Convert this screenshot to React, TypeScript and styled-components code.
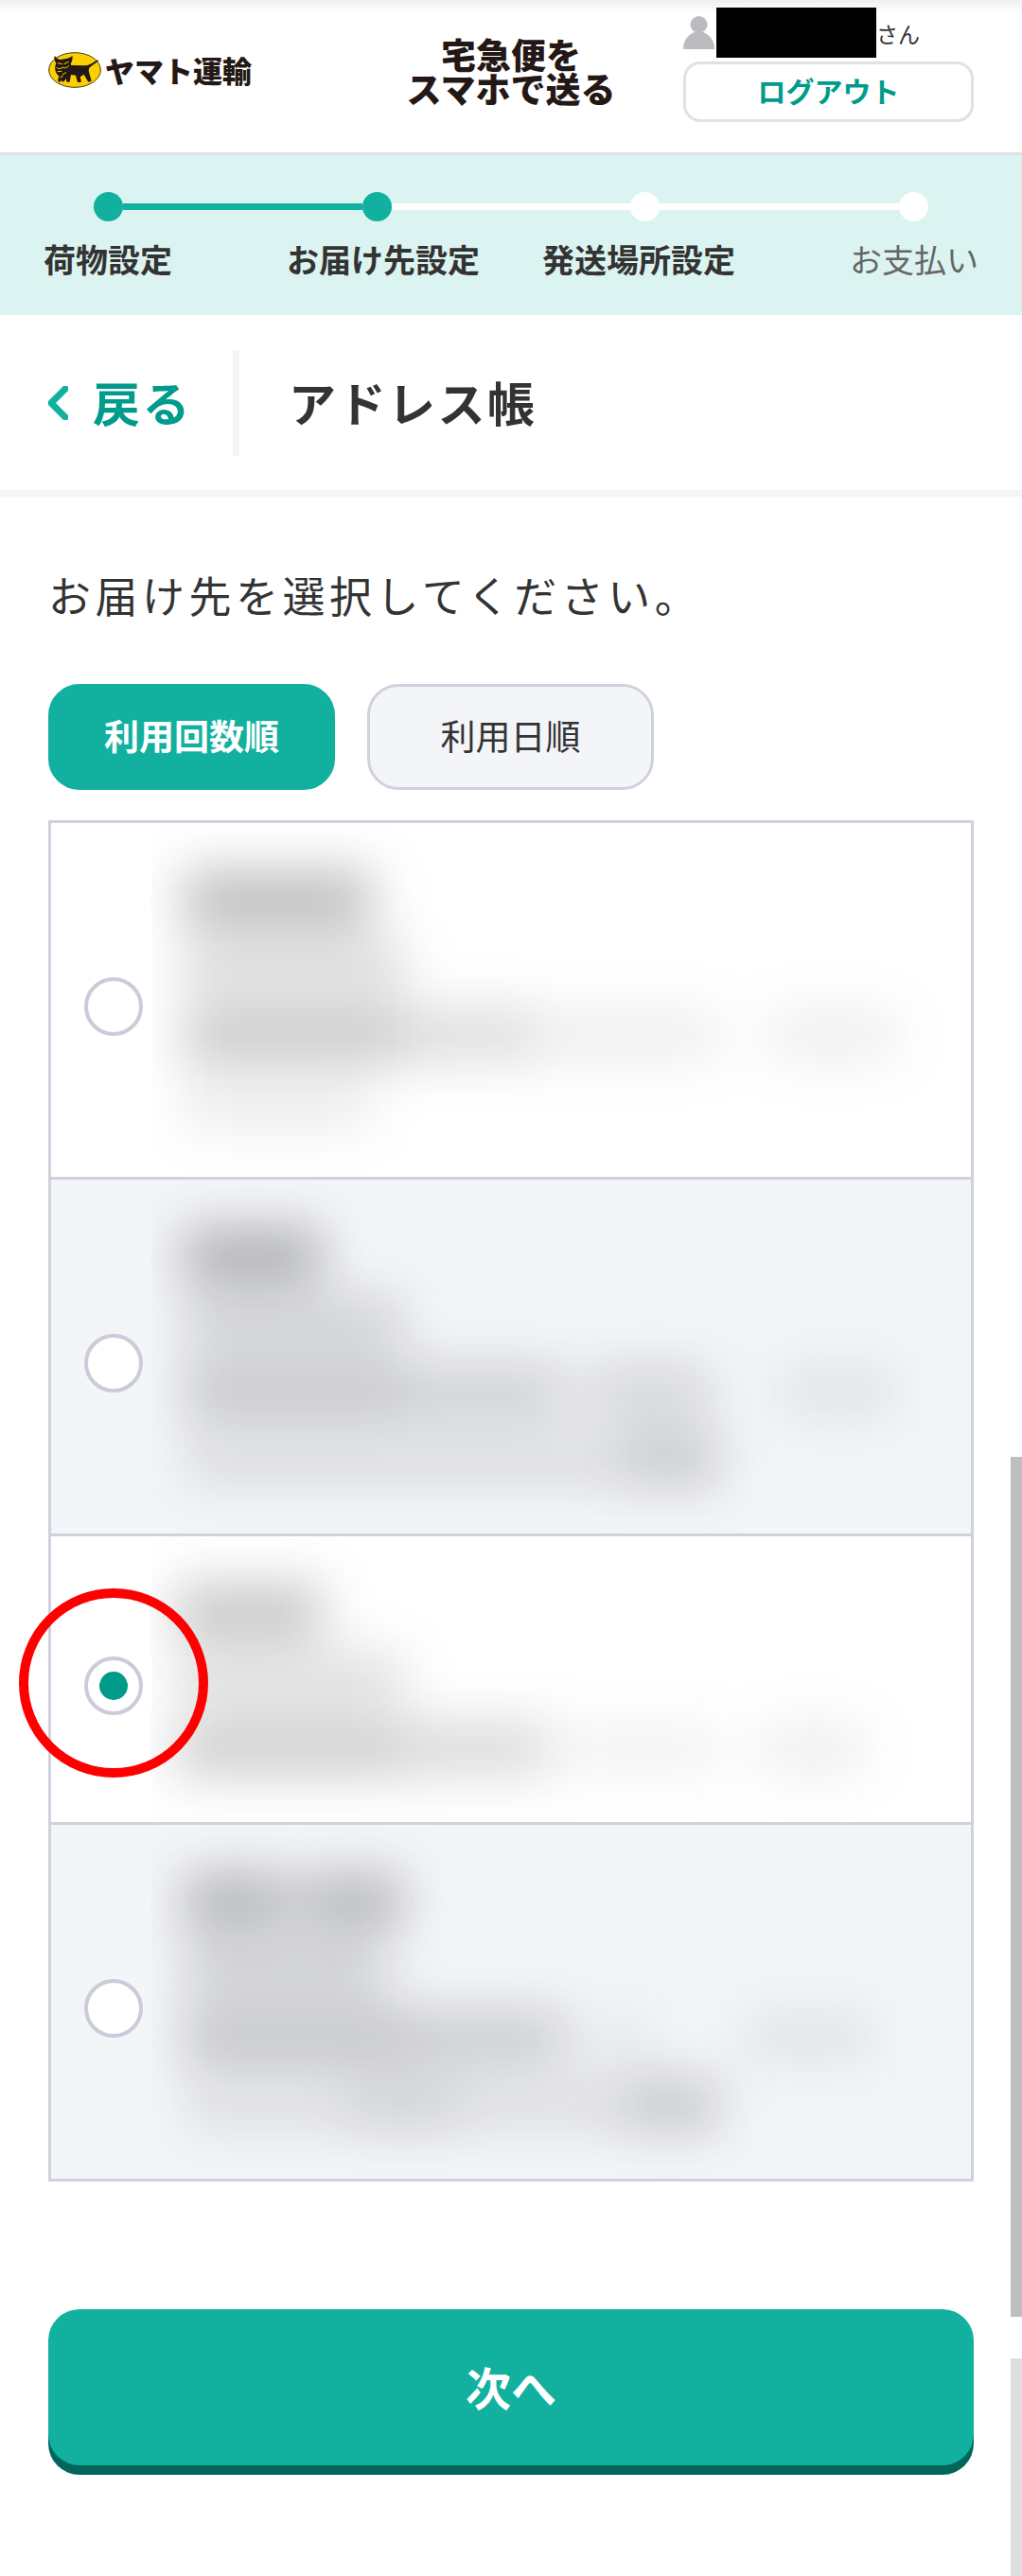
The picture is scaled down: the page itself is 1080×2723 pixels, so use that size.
import React, { useState } from "react";
import styled, { createGlobalStyle } from "styled-components";

const color = {
  green: "#12b09f",
  greenText: "#009b8a",
  greenShadow: "#00665b",
  mint: "#dcf4f1",
  text: "#333333",
  muted: "#666666",
  line: "#e0e1e8",
  border: "#cfd2dd",
  pale: "#f4f5f8",
};

const GlobalStyle = createGlobalStyle`
  *, *::before, *::after { box-sizing: border-box; }
  body {
    margin: 0;
    background: #ffffff;
    color: ${color.text};
    font-family: "Noto Sans CJK JP", "Noto Sans", sans-serif;
  }
  button { font-family: inherit; margin: 0; padding: 0 0 4px; cursor: pointer; }
  h1, h2, p, ol, ul { margin: 0; padding: 0; }
  ol, ul { list-style: none; }
`;

const Page = styled.div`
  position: relative;
  width: 100%;
  overflow: hidden;
`;

const Header = styled.header`
  display: grid;
  grid-template-columns: 1fr auto 1fr;
  height: 164px;
  padding: 0 51px;
  border-bottom: 3px solid ${color.line};
  background: linear-gradient(#efefef, #ffffff 14px);
`;

const Brand = styled.a`
  display: flex;
  align-items: center;
  align-self: start;
  gap: 4px;
  height: 148px;
  color: #231815;
  font-size: 31px;
  font-weight: 900;
  line-height: 36px;
  text-decoration: none;
  white-space: nowrap;
`;

const ServiceName = styled.h1`
  padding-top: 39px;
  color: #231815;
  font-size: 37px;
  font-weight: 900;
  line-height: 36px;
  text-align: center;
  white-space: nowrap;
`;

const Account = styled.div`
  justify-self: end;
  width: 307px;
  padding-top: 8px;
`;

const User = styled.div`
  display: flex;
  align-items: center;
  height: 53px;
  margin-bottom: 4px;
  font-size: 23px;
  line-height: 36px;
`;

const HiddenName = styled.span`
  width: 169px;
  height: 53px;
  margin-left: 2px;
  background: #000000;
`;

const Logout = styled.button`
  display: block;
  width: 100%;
  height: 64px;
  border: 3px solid ${color.line};
  border-radius: 18px;
  background: #ffffff;
  color: ${color.greenText};
  font-size: 30px;
  font-weight: 700;
  line-height: 48px;
`;

const Progress = styled.nav`
  height: 169px;
  padding-top: 39px;
  background: ${color.mint};
`;

const Track = styled.div`
  display: flex;
  align-items: center;
  padding: 0 99px;
`;

const Dot = styled.span<{ $done: boolean }>`
  width: 31px;
  height: 31px;
  border-radius: 50%;
  background: ${(p) => (p.$done ? color.green : "#ffffff")};
`;

const Bar = styled.span<{ $done: boolean }>`
  flex: 1;
  height: 7px;
  background: ${(p) => (p.$done ? color.green : "#ffffff")};
`;

const Labels = styled.ol`
  display: grid;
  grid-template-columns: repeat(4, 1fr);
  margin-top: 16px;
  font-size: 34px;
  line-height: 48px;
  text-align: center;
  white-space: nowrap;
`;

const Label = styled.li<{ $strong: boolean }>`
  color: ${(p) => (p.$strong ? color.text : color.muted)};
  font-weight: ${(p) => (p.$strong ? 700 : 400)};
  &:first-child { padding-left: 46px; text-align: left; }
  &:last-child { padding-right: 46px; text-align: right; }
`;

const TitleBar = styled.div`
  display: flex;
  align-items: center;
  height: 192px;
  padding: 0 51px;
  border-bottom: 7px solid ${color.pale};
  font-size: 50px;
  font-weight: 700;
  line-height: 72px;
  letter-spacing: 0.05em;
`;

const Back = styled.a`
  display: flex;
  align-items: center;
  gap: 26px;
  height: 112px;
  padding-right: 43px;
  border-right: 7px solid ${color.pale};
  color: ${color.greenText};
  text-decoration: none;
`;

const BarText = styled.span`
  padding-bottom: 4px;
`;

const Title = styled.h2`
  padding: 0 0 4px 52px;
  font-size: inherit;
  font-weight: inherit;
`;

const Main = styled.main`
  padding: 70px 51px 117px;
`;

const Lead = styled.p`
  font-size: 45px;
  line-height: 68px;
  letter-spacing: 0.1em;
`;

const Sorts = styled.div`
  display: flex;
  gap: 34px;
  margin: 60px 0 32px;
`;

const SortButton = styled.button<{ $active: boolean }>`
  width: 303px;
  height: 112px;
  border: 3px solid ${(p) => (p.$active ? color.green : color.border)};
  border-radius: 33px;
  background: ${(p) => (p.$active ? color.green : color.pale)};
  color: ${(p) => (p.$active ? "#ffffff" : color.text)};
  font-size: 37px;
  font-weight: ${(p) => (p.$active ? 700 : 400)};
  line-height: 48px;
`;

const List = styled.ul`
  border: 3px solid ${color.border};
`;

const Row = styled.li`
  display: flex;
  align-items: center;
  gap: 9px;
  padding: 0 8px 0 35px;
  & + & { border-top: 3px solid ${color.border}; }
  &:nth-child(even) { background: ${color.pale}; }
`;

const RadioCell = styled.div`
  position: relative;
  display: flex;
  padding-top: 14px;
`;

const Radio = styled.input`
  appearance: none;
  display: grid;
  place-items: center;
  width: 62px;
  height: 62px;
  margin: 0;
  border: 4px solid #cbccda;
  border-radius: 50%;
  background: #ffffff;
  cursor: pointer;
  &:checked::before {
    content: "";
    width: 30px;
    height: 30px;
    border-radius: 50%;
    background: ${color.greenText};
  }
`;

const Marker = styled.span`
  position: absolute;
  z-index: 1;
  top: -58px;
  left: -69px;
  width: 200px;
  height: 200px;
  border: 10px solid #ff0000;
  border-radius: 50%;
  pointer-events: none;
`;

const Entry = styled.label`
  flex: 1;
  overflow: hidden;
  padding: 44px 0 42px;
`;

const Masked = styled.span`
  display: block;
  filter: blur(27px);
`;

const MaskedLine = styled.span`
  display: flex;
  align-items: center;
  height: 72px;
`;

const Smudge = styled.span`
  height: 56px;
  background: ${color.text};
`;

const Next = styled.button`
  display: block;
  width: 100%;
  height: 165px;
  margin-top: 135px;
  border: 0;
  border-radius: 33px;
  background: ${color.green};
  box-shadow: 0 10px 0 ${color.greenShadow};
  color: #ffffff;
  font-size: 48px;
  font-weight: 700;
  line-height: 72px;
`;

const Scroll = styled.div`
  position: absolute;
  z-index: 2;
  top: 0;
  right: 0;
  bottom: 0;
  display: flex;
  flex-direction: column;
  justify-content: flex-end;
  gap: 44px;
  width: 12px;
  pointer-events: none;
`;

const Thumb = styled.span`
  height: 909px;
  background: #bebebe;
`;

const Rest = styled.span`
  height: 230px;
  background: #dddee0;
`;

function CatLogo() {
  return (
    <svg width="56" height="38" viewBox="0 0 168 114" aria-hidden="true">
      <ellipse cx="84" cy="57" rx="82" ry="55" fill="#fccf00" stroke="#4b3c10" strokeWidth="3" />
      <path
        fill="#231815"
        d="M20 11 C25 19 31 23 39 24 L56 21 C64 20 70 17 77 12 C77 24 75 31 71 37 L73 42 L112 43 C124 43 134 39 144 32 L156 25 C159 25 159 29 156 31 L136 45 C129 50 127 55 129 63 L137 92 L127 95 L113 71 L101 79 L105 95 L93 96 L87 74 L72 72 L68 95 L58 95 L57 84 L48 95 L41 91 L35 96 L30 90 L34 76 C25 69 20 58 22 44 L25 36 C20 28 18 20 20 11 Z"
      />
      <path
        fill="none"
        stroke="#fccf00"
        strokeWidth="3"
        strokeLinecap="round"
        d="M31 35 L43 38 M50 38 L64 31 M27 50 C34 54 40 54 45 49 C52 52 60 50 65 44 M30 62 L42 61 M45 72 L56 65 M38 80 L46 77"
      />
    </svg>
  );
}

function PersonIcon() {
  return (
    <svg width="33" height="35" viewBox="0 0 33 35" aria-hidden="true">
      <circle cx="16.5" cy="9" r="9" fill="#bbbbc0" />
      <path d="M0 35 C0 25 6 19 12 17 H21 C27 19 33 25 33 35 Z" fill="#bbbbc0" />
    </svg>
  );
}

function BackIcon() {
  return (
    <svg width="21" height="36" viewBox="0 0 21 36" aria-hidden="true">
      <path
        d="M18 3 L3 18 L18 33"
        fill="none"
        stroke={color.green}
        strokeWidth="7"
        strokeLinecap="round"
        strokeLinejoin="round"
      />
    </svg>
  );
}

const steps = [
  { label: "荷物設定", done: true, strong: true },
  { label: "お届け先設定", done: true, strong: true },
  { label: "発送場所設定", done: false, strong: true },
  { label: "お支払い", done: false, strong: false },
];

const sorts = ["利用回数順", "利用日順"];

/* Each masked line is a run of [space before, width, strength], in percent. */
type Run = [number, number, number];

const entries: Run[][][] = [
  [
    [[4, 23, 34]],
    [[4, 27, 18]],
    [[4, 27, 27], [0, 17, 17], [1, 21, 8], [6, 16, 8]],
    [[4, 23, 9]],
  ],
  [
    [[4, 17, 37]],
    [[4, 27, 19]],
    [[4, 27, 24], [0, 20, 19], [3, 15, 16], [8, 15, 9]],
    [[4, 54, 12], [0, 12, 22]],
  ],
  [
    [[3, 18, 29]],
    [[3, 28, 16]],
    [[3, 28, 25], [0, 18, 18], [2, 19, 6], [5, 13, 8]],
  ],
  [
    [[4, 11, 34], [0, 5, 22], [0, 11, 32]],
    [[4, 25, 20]],
    [[4, 27, 26], [0, 20, 21], [3, 8, 6], [11, 16, 9]],
    [[4, 20, 11], [0, 14, 18], [0, 20, 11], [0, 12, 23]],
  ],
];

export default function App() {
  const [sort, setSort] = useState(0);
  const [chosen, setChosen] = useState(2);

  return (
    <Page>
      <GlobalStyle />
      <Header>
        <Brand href="#home">
          <CatLogo />
          ヤマト運輸
        </Brand>
        <ServiceName>
          宅急便を
          <br />
          スマホで送る
        </ServiceName>
        <Account>
          <User>
            <PersonIcon />
            <HiddenName />
            さん
          </User>
          <Logout type="button">ログアウト</Logout>
        </Account>
      </Header>

      <Progress>
        <Track>
          {steps.map((step, i) => (
            <React.Fragment key={step.label}>
              {i > 0 && <Bar $done={step.done} />}
              <Dot $done={step.done} />
            </React.Fragment>
          ))}
        </Track>
        <Labels>
          {steps.map((step) => (
            <Label key={step.label} $strong={step.strong}>
              {step.label}
            </Label>
          ))}
        </Labels>
      </Progress>

      <TitleBar>
        <Back href="#back">
          <BackIcon />
          <BarText>戻る</BarText>
        </Back>
        <Title>アドレス帳</Title>
      </TitleBar>

      <Main>
        <Lead>お届け先を選択してください。</Lead>
        <Sorts>
          {sorts.map((name, i) => (
            <SortButton
              key={name}
              type="button"
              $active={sort === i}
              aria-pressed={sort === i}
              onClick={() => setSort(i)}
            >
              {name}
            </SortButton>
          ))}
        </Sorts>

        <List>
          {entries.map((lines, i) => (
            <Row key={i}>
              <RadioCell>
                <Radio
                  type="radio"
                  name="address"
                  id={`address-${i}`}
                  checked={chosen === i}
                  onChange={() => setChosen(i)}
                />
                {chosen === i && <Marker />}
              </RadioCell>
              <Entry htmlFor={`address-${i}`}>
                <Masked>
                  {lines.map((runs, l) => (
                    <MaskedLine key={l}>
                      {runs.map(([space, width, strength], r) => (
                        <Smudge
                          key={r}
                          style={{
                            marginLeft: `${space}%`,
                            width: `${width}%`,
                            opacity: strength / 100,
                          }}
                        />
                      ))}
                    </MaskedLine>
                  ))}
                </Masked>
              </Entry>
            </Row>
          ))}
        </List>

        <Next type="button">次へ</Next>
      </Main>

      <Scroll>
        <Thumb />
        <Rest />
      </Scroll>
    </Page>
  );
}
